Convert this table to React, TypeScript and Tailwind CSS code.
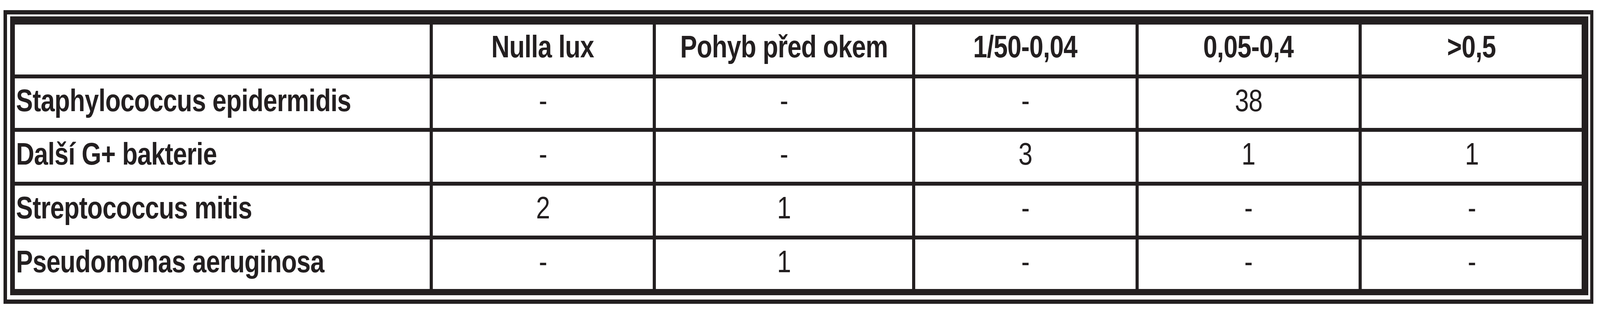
import React from 'react';

// The window is narrower than the 5060px source, so horizontal sizes are fractions
// of the width and the text is narrowed to the same ratio; vertical sizes stay in px.

const headers = ['Nulla lux', 'Pohyb před okem', '1/50-0,04', '0,05-0,4', '>0,5'];

const rows: { name: string; values: string[] }[] = [
    { name: 'Staphylococcus epidermidis', values: ['-', '-', '-', '38', ''] },
    { name: 'Další G+ bakterie', values: ['-', '-', '3', '1', '1'] },
    { name: 'Streptococcus mitis', values: ['2', '1', '-', '-', '-'] },
    { name: 'Pseudomonas aeruginosa', values: ['-', '1', '-', '-', '-'] },
];

const cell = 'bg-white pt-[17px] text-[80px] leading-none tracking-[-1px] whitespace-nowrap overflow-visible';

function Txt({ children, left }: { children: React.ReactNode; left?: boolean }) {
    return (
        <span className={`inline-block scale-x-[0.81] ${left ? 'origin-left' : 'origin-center'}`}>
            {children}
        </span>
    );
}

export default function App() {
    return (
        <div className="w-full h-[800px] bg-white pt-[26px] pl-[9px] pr-[17px] text-[#231f20] font-['Liberation_Sans',Arial,sans-serif]">
            <div className="border-[#231f20] border-t-[11px] border-b-[11px] border-l-[9px] border-r-[8px] pt-[5px] pl-[8px] pr-[5px] pb-[11px]">
                <div className="grid grid-cols-[1294fr_722fr_722fr_722fr_722fr_722fr] grid-rows-[128px_127px_128px_128px_127px] gap-y-[10px] gap-x-[8px] bg-[#231f20] border-[#231f20] border-t-[21px] border-l-[12px] border-r-[17px] border-b-[16px]">
                    {/* header */}
                    <div className={cell} />
                    {headers.map((h) => (
                        <div key={h} className={`${cell} font-bold text-center`}>
                            <Txt>{h}</Txt>
                        </div>
                    ))}

                    {rows.map((r) => (
                        <React.Fragment key={r.name}>
                            <div className={`${cell} font-bold pl-[3px]`}>
                                <Txt left>{r.name}</Txt>
                            </div>
                            {r.values.map((v, i) => (
                                <div key={i} className={`${cell} text-center`}>
                                    {v && <Txt>{v}</Txt>}
                                </div>
                            ))}
                        </React.Fragment>
                    ))}
                </div>
            </div>
        </div>
    );
}
